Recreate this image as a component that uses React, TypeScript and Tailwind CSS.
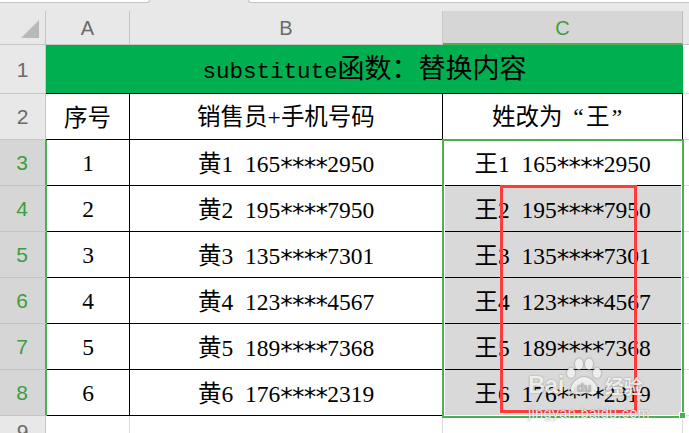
import React from "react";

const rows = [
  { n: 1, b: "黄", c: "王", pre: "165", suf: "2950" },
  { n: 2, b: "黄", c: "王", pre: "195", suf: "7950" },
  { n: 3, b: "黄", c: "王", pre: "135", suf: "7301" },
  { n: 4, b: "黄", c: "王", pre: "123", suf: "4567" },
  { n: 5, b: "黄", c: "王", pre: "189", suf: "7368" },
  { n: 6, b: "黄", c: "王", pre: "176", suf: "2319" },
];

function Star() {
  return (
    <span className="inline-block w-[11.75px] text-center font-['DejaVu_Sans'] text-[25px] leading-none relative top-[3px]">
      *
    </span>
  );
}

function Phone({ cn, n, pre, suf }: { cn: string; n: number; pre: string; suf: string }) {
  return (
    <span className="whitespace-nowrap leading-none">
      <span className="font-['Noto_Sans_CJK_SC']">{cn}</span>
      <span className="font-['Liberation_Serif']">{n}</span>
      <span className="inline-block w-[0.5em]" />
      <span className="font-['Liberation_Serif']">{pre}</span>
      <Star />
      <Star />
      <Star />
      <Star />
      <span className="font-['Liberation_Serif']">{suf}</span>
    </span>
  );
}

function DataRow({ r, i }: { r: (typeof rows)[number]; i: number }) {
  const sel = i > 0;
  return (
    <div className="flex h-[46px]">
      <div className="w-[47px] shrink-0 flex items-center justify-center bg-[#d6d6d6] border-r-2 border-r-[#4caf50] border-b border-b-[#c4c4c4] text-[#3d9e3d] font-['Liberation_Sans'] text-[21px] leading-none pr-[1px]">
        {i + 3}
      </div>
      <div className="w-[83px] shrink-0 flex items-center justify-center bg-white border-r border-b border-black pt-[3px]">
        <span className="leading-none font-['Liberation_Serif']">{r.n}</span>
      </div>
      <div className="w-[313px] shrink-0 flex items-center justify-center bg-white border-r border-b border-black pt-[3px]">
        <Phone cn={r.b} n={r.n} pre={r.pre} suf={r.suf} />
      </div>
      <div
        className={
          sel
            ? "w-[240px] shrink-0 flex items-center justify-center bg-[#d9d9d9] border-r border-b border-black pt-[3px]"
            : "w-[240px] shrink-0 flex items-center justify-center bg-white border-r border-b border-black pt-[3px]"
        }
      >
        <Phone cn={r.c} n={r.n} pre={r.pre} suf={r.suf} />
      </div>
      <div className="flex-1 bg-white border-b border-[#dadada]" />
    </div>
  );
}

export default function App() {
  return (
    <div className="relative w-[689px] h-[433px] overflow-hidden bg-[#e8e8e8] font-['Noto_Sans_CJK_SC'] text-[23.5px] text-black">
      {/* top strip */}
      <div className="flex h-[11px]">
        <div className="w-[150px] h-[3px] bg-white border-b border-r border-[#c4c4c4] rounded-br-[4px]" />
        <div className="w-[98px]" />
        <div className="flex-1 h-[3px] bg-white border-b border-l border-[#c4c4c4] rounded-bl-[4px]" />
      </div>

      {/* column headers */}
      <div className="flex h-[34px] font-['Liberation_Sans'] text-[20px] leading-none text-[#6a6a6a]">
        <div className="relative w-[46px] shrink-0 border-r border-b border-[#c6c6c6]">
          <svg className="absolute left-0 top-0" width="46" height="34" viewBox="0 0 46 34">
            <polygon points="21,27 39,9 39,27" fill="#b9b9b9" />
          </svg>
        </div>
        <div className="w-[84px] shrink-0 flex items-center justify-center border-r border-b border-[#c6c6c6] pt-[1px]">A</div>
        <div className="w-[313px] shrink-0 flex items-center justify-center border-r border-b border-[#c6c6c6] pt-[1px]">B</div>
        <div className="w-[240px] shrink-0 flex items-center justify-center bg-[#d6d6d6] border-r border-r-[#bdbdbd] border-b-2 border-b-[#4caf50] text-[#3d9e3d] pt-[2px]">
          C
        </div>
        <div className="flex-1 border-b border-[#c6c6c6]" />
      </div>

      {/* row 1 */}
      <div className="flex h-[49px]">
        <div className="w-[46px] shrink-0 flex items-center justify-center border-r border-b border-[#c6c6c6] font-['Liberation_Sans'] text-[21px] leading-none text-[#6a6a6a]">
          1
        </div>
        <div className="w-[637px] shrink-0 flex items-center justify-center bg-[#00af50] border-b border-black pb-[1px]">
          <span className="whitespace-nowrap leading-none">
            <span className="font-['Liberation_Mono'] text-[22.5px]">substitute</span>
            <span className="font-['Noto_Sans_CJK_SC'] text-[27px]">函数：替换内容</span>
          </span>
        </div>
        <div className="flex-1 bg-white border-b border-[#dadada]" />
      </div>

      {/* row 2 */}
      <div className="flex h-[46px]">
        <div className="w-[46px] shrink-0 flex items-center justify-center border-r border-b border-[#c6c6c6] font-['Liberation_Sans'] text-[21px] leading-none text-[#6a6a6a]">
          2
        </div>
        <div className="w-[84px] shrink-0 flex items-center justify-center bg-white border-r border-b border-black">
          <span className="leading-none">序号</span>
        </div>
        <div className="w-[313px] shrink-0 flex items-center justify-center bg-white border-r border-b border-black">
          <span className="leading-none whitespace-nowrap">
            销售员<span className="font-['Liberation_Serif']">+</span>手机号码
          </span>
        </div>
        <div className="w-[240px] shrink-0 flex items-center justify-center bg-white border-r border-b border-black">
          <span className="leading-none whitespace-nowrap">
            姓改为<span className="inline-block w-[1em] text-right pr-[0.1em] font-['Liberation_Serif']">“</span>王
            <span className="inline-block w-[1em] text-left pl-[0.1em] font-['Liberation_Serif']">”</span>
          </span>
        </div>
        <div className="flex-1 bg-white border-b border-[#dadada]" />
      </div>

      {rows.map((r, i) => (
        <DataRow key={i} r={r} i={i} />
      ))}

      {/* row 9 */}
      <div className="flex h-[30px]">
        <div className="w-[46px] shrink-0 flex items-center justify-center border-r border-[#c6c6c6] font-['Liberation_Sans'] text-[21px] leading-none text-[#6a6a6a]">
          9
        </div>
        <div className="w-[84px] shrink-0 bg-white border-r border-[#dadada]" />
        <div className="w-[313px] shrink-0 bg-white border-r border-[#dadada]" />
        <div className="w-[240px] shrink-0 bg-white border-r border-[#dadada]" />
        <div className="flex-1 bg-white" />
      </div>

      {/* selection box */}
      <div className="absolute left-[442px] top-[139px] w-[242px] h-[279px] border-[2.5px] border-[#4caf50] shadow-[inset_0_0_0_1px_white] pointer-events-none" />
      <div className="absolute left-[679px] top-[412px] w-[7px] h-[7px] bg-[#4caf50] border border-white pointer-events-none" />

      {/* red annotation */}
      <div className="absolute left-[500px] top-[185px] w-[137px] h-[228px] border-[3px] border-[#ff3b3b] pointer-events-none" />

      {/* watermark */}
      <div className="absolute left-[528px] top-[358px] w-[124px] h-[62px] pointer-events-none text-white/85 [text-shadow:0_0_1.5px_rgba(0,0,0,0.45)]">
        <div className="flex items-end h-[38px]">
          <span className="font-['Liberation_Sans'] font-bold text-[24px] leading-none mb-[-1px] tracking-[-0.5px]">Bai</span>
          <svg width="40" height="38" viewBox="0 0 40 38" className="drop-shadow-[0_0_1px_rgba(0,0,0,0.45)]">
            <g fill="rgba(255,255,255,0.85)">
              <ellipse cx="7" cy="15" rx="4" ry="5" />
              <ellipse cx="15" cy="6" rx="4" ry="5.5" />
              <ellipse cx="25" cy="6" rx="4" ry="5.5" />
              <ellipse cx="33" cy="15" rx="4" ry="5" />
              <path d="M20 19 C13 19 8 26 7 30 C6 35 10 37 14 36 C17 35 23 35 26 36 C30 37 34 35 33 30 C32 26 27 19 20 19 Z" />
            </g>
            <text x="20" y="34" textAnchor="middle" fontFamily="Liberation Sans" fontWeight="700" fontSize="12" fill="#bdbdbd">
              du
            </text>
          </svg>
          <span className="font-['Noto_Sans_CJK_SC'] font-bold text-[19px] leading-none mb-[1px] ml-[1px]">经验</span>
        </div>
        <div className="font-['Liberation_Sans'] text-[14.5px] leading-none mt-[10px] tracking-[0.3px]">jingyan.baidu.com</div>
      </div>
    </div>
  );
}
